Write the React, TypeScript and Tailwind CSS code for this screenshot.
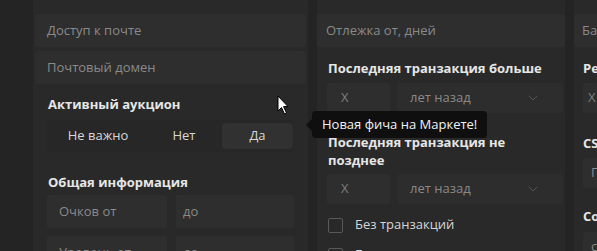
import { ChevronDown } from "lucide-react";

const Field = ({ text, className = "" }: { text: string; className?: string }) => (
  <div className={`flex h-[33px] shrink-0 items-center rounded-[3px] bg-[#2e2e2e] text-[#8a8a8a] ${className}`}>{text}</div>
);

const Label = ({ text, className = "" }: { text: string; className?: string }) => (
  <div className={`shrink-0 text-[13px] font-bold leading-[18px] text-[#e6e6e6] ${className}`}>{text}</div>
);

const YearsRow = ({ className = "" }: { className?: string }) => (
  <div className={`flex h-[30px] shrink-0 gap-[7px] ${className}`}>
    <div className="flex w-[63px] items-center rounded-[3px] bg-[#2e2e2e] pl-[14px] text-[#7e7e7e]">X</div>
    <div className="flex flex-1 items-center justify-between rounded-[3px] bg-[#2d2d2d] pl-[13px] pr-[22px] text-[#8a8a8a]">
      <span>лет назад</span>
      <ChevronDown size={16} strokeWidth={1.2} className="text-[#5e5e5e]" />
    </div>
  </div>
);

const Checkbox = ({ text, className = "" }: { text: string; className?: string }) => (
  <div className={`flex h-[18px] shrink-0 items-center gap-[12px] ${className}`}>
    <div className="ml-[1px] h-[15px] w-[15px] rounded-[2px] border-[1.5px] border-[#595959]" />
    <span className="text-[#d6d6d6]">{text}</span>
  </div>
);

export default function App() {
  return (
    <div className="relative h-[251px] w-[597px] overflow-hidden bg-[#242424] font-['Open_Sans',sans-serif] text-[13px]">
      <div className="flex h-full gap-[9px] pl-[33px]">
        {/* column 1 */}
        <div className="flex w-[275px] shrink-0 flex-col bg-[#292929] px-[14px] pt-[14px]">
          <Field text="Доступ к почте" className="-mx-[12px] px-[12px]" />
          <Field text="Почтовый домен" className="-mx-[12px] mt-[4px] px-[12px]" />
          <Label text="Активный аукцион" className="ml-[1px] mt-[11px]" />
          <div className="mt-[7px] flex h-[32px] shrink-0 items-center rounded-[4px] bg-[#272727] pl-[13px] text-[#d8d8d8]">
            <div className="flex h-[26px] w-[76px] items-center justify-center">Не важно</div>
            <div className="ml-[12px] flex h-[26px] w-[72px] items-center justify-center">Нет</div>
            <div className="ml-[2px] flex h-[26px] w-[71px] items-center justify-center rounded-[4px] bg-[#313131]">Да</div>
          </div>
          <Label text="Общая информация" className="ml-[1px] mt-[21px]" />
          <div className="mt-[4px] flex shrink-0 gap-[9px]">
            <Field text="Очков от" className="w-[120px] pl-[12px]" />
            <Field text="до" className="flex-1 pl-[7px]" />
          </div>
          <div className="mt-[8px] flex shrink-0 gap-[9px]">
            <Field text="Уровень от" className="w-[120px] pl-[12px]" />
            <Field text="до" className="flex-1 pl-[7px]" />
          </div>
        </div>

        {/* column 2 */}
        <div className="flex w-[248px] shrink-0 flex-col bg-[#292929] pl-[10px] pr-[2px] pt-[14px]">
          <Field text="Отлежка от, дней" className="-ml-[10px] -mr-[2px] pl-[9px]" />
          <Label text="Последняя транзакция больше" className="ml-[1px] mt-[12px]" />
          <YearsRow className="mt-[6px]" />
          <Label text="Последняя транзакция не позднее" className="ml-[1px] mt-[20px] w-[222px] leading-[17px]" />
          <YearsRow className="mt-[5px]" />
          <Checkbox text="Без транзакций" className="mt-[12px]" />
          <Checkbox text="Без активных продаж" className="mt-[12px]" />
        </div>

        {/* column 3 */}
        <div className="flex w-[200px] shrink-0 flex-col bg-[#292929] pl-[9px] pt-[14px]">
          <Field text="Баланс от" className="-ml-[9px] pl-[8px]" />
          <Label text="Регистрация больше" className="mt-[12px]" />
          <div className="mt-[6px] flex h-[30px] w-[63px] shrink-0 items-center rounded-[3px] bg-[#2e2e2e] pl-[5px] text-[#7e7e7e]">X</div>
          <Label text="CS2 профиль" className="mt-[21px]" />
          <div className="mt-[6px] flex h-[30px] shrink-0 items-center rounded-[3px] bg-[#2e2e2e] pl-[8px] text-[#8a8a8a]">Профиль</div>
          <Label text="Сообщество" className="mt-[19px]" />
          <div className="mt-[7px] flex h-[30px] shrink-0 items-center rounded-[3px] bg-[#2e2e2e] pl-[8px] text-[#8a8a8a]">с</div>
        </div>
      </div>

      {/* tooltip */}
      <div className="absolute left-[312px] top-[111px] flex h-[27px] items-center rounded-[4px] bg-[#0f0f0f] px-[10px] text-[13px] text-[#f2f2f2]">
        <div className="absolute -left-[6px] top-1/2 h-0 w-0 -translate-y-1/2 border-y-[6px] border-r-[6px] border-y-transparent border-r-[#0f0f0f]" />
        Новая фича на Маркете!
      </div>

      {/* cursor */}
      <svg className="absolute left-[277px] top-[95px]" width="13" height="21" viewBox="0 0 13 21">
        <path d="M1 1 L1 16 L4.5 12.5 L7.5 19 L9.5 18 L6.6 11.6 L11 11.6 Z" fill="#ffffff" stroke="#000000" strokeWidth="1" strokeLinejoin="round" />
      </svg>
    </div>
  );
}
